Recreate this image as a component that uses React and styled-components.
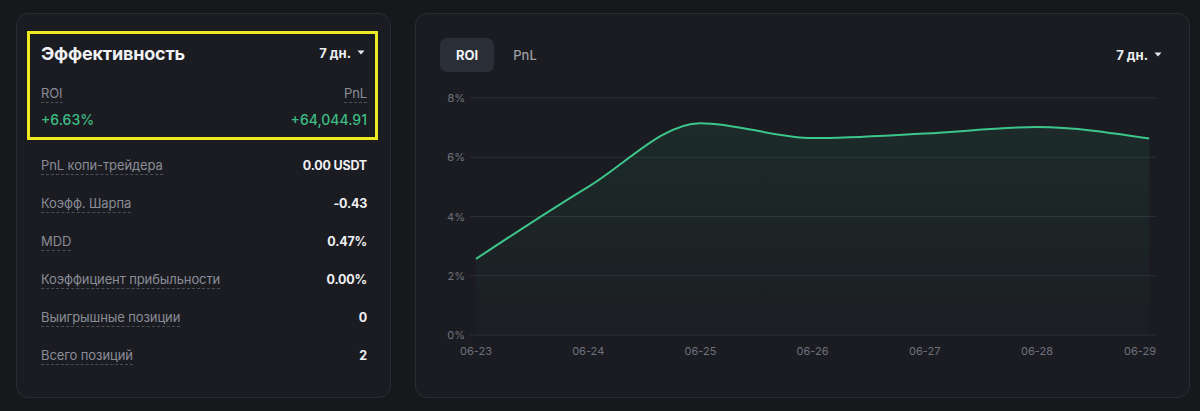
import React from 'react';
import styled, { createGlobalStyle } from 'styled-components';

const GlobalStyle = createGlobalStyle`
    body {
        margin: 0;
        background: #17181c;
        font-family: Inter, "Noto Sans", sans-serif;
        -webkit-font-smoothing: antialiased;
    }
`;

const stats = [
    { label: 'PnL копи-трейдера', value: '0.00 USDT' },
    { label: 'Коэфф. Шарпа', value: '-0.43' },
    { label: 'MDD', value: '0.47%' },
    { label: 'Коэффициент прибыльности', value: '0.00%' },
    { label: 'Выигрышные позиции', value: '0' },
    { label: 'Всего позиций', value: '2' },
];

const series = [
    { day: '06-23', roi: 2.57 },
    { day: '06-24', roi: 5.0 },
    { day: '06-25', roi: 7.15 },
    { day: '06-26', roi: 6.65 },
    { day: '06-27', roi: 6.8 },
    { day: '06-28', roi: 7.02 },
    { day: '06-29', roi: 6.63 },
];

const CH = { left: 30, right: 716, zero: 251, step: 29.625, x0: 36, dx: 112.2 };

function monotonePath(pts) {
    const n = pts.length;
    const s = [];
    for (let i = 0; i < n - 1; i++) {
        s.push((pts[i + 1][1] - pts[i][1]) / (pts[i + 1][0] - pts[i][0]));
    }
    const t = new Array(n).fill(0);
    for (let i = 1; i < n - 1; i++) {
        const h0 = pts[i][0] - pts[i - 1][0];
        const h1 = pts[i + 1][0] - pts[i][0];
        const p = (s[i - 1] * h1 + s[i] * h0) / (h0 + h1);
        t[i] = (Math.sign(s[i - 1]) + Math.sign(s[i])) *
            Math.min(Math.abs(s[i - 1]), Math.abs(s[i]), 0.5 * Math.abs(p)) || 0;
    }
    t[0] = (3 * s[0] - t[1]) / 2;
    t[n - 1] = (3 * s[n - 2] - t[n - 2]) / 2;
    let d = `M${pts[0][0]},${pts[0][1]}`;
    for (let i = 0; i < n - 1; i++) {
        const [xa, ya] = pts[i];
        const [xb, yb] = pts[i + 1];
        const h = (xb - xa) / 3;
        d += ` C${xa + h},${ya + h * t[i]} ${xb - h},${yb - h * t[i + 1]} ${xb},${yb}`;
    }
    return d;
}

function Caret() {
    return (
        <svg width="8" height="5" viewBox="0 0 8 5">
            <path d="M0.5 0.5 H7.5 L4 4.5 Z" fill="#e8e9ee" />
        </svg>
    );
}

function RoiChart() {
    const pts = series.map((p, i) => [CH.x0 + CH.dx * i, CH.zero - p.roi * CH.step]);
    const line = monotonePath(pts);
    const last = pts[pts.length - 1];
    const area = `${line} L${last[0]},${CH.zero} L${pts[0][0]},${CH.zero} Z`;
    const ticks = [0, 2, 4, 6, 8];

    return (
        <ChartSvg width="726" height="290" viewBox="0 0 726 290">
            <defs>
                <linearGradient id="roiFill" x1="0" y1="0" x2="0" y2="1">
                    <stop offset="0%" stopColor="#2fbf83" stopOpacity="0.09" />
                    <stop offset="100%" stopColor="#2fbf83" stopOpacity="0.01" />
                </linearGradient>
            </defs>
            {ticks.map((v) => {
                const y = CH.zero - v * CH.step;
                return (
                    <g key={v}>
                        <line x1={CH.left} x2={CH.right} y1={y} y2={y} stroke="#2d2f37" strokeWidth="1" />
                        <text x="25" y={y + 4} textAnchor="end" fontSize="11" fill="#6f727d">{v}%</text>
                    </g>
                );
            })}
            <path d={area} fill="url(#roiFill)" />
            <path d={line} fill="none" stroke="#3cc68c" strokeWidth="2" />
            {series.map((p, i) => {
                const lastOne = i === series.length - 1;
                return (
                    <text
                        key={p.day}
                        x={lastOne ? CH.right : CH.x0 + CH.dx * i}
                        y="271"
                        textAnchor={lastOne ? 'end' : 'middle'}
                        fontSize="11"
                        fill="#6f727d"
                    >
                        {p.day}
                    </text>
                );
            })}
        </ChartSvg>
    );
}

function App() {
    return (
        <>
            <GlobalStyle />
            <Page>
                <StatsCard>
                    <Highlight>
                        <TitleRow>
                            <Title>Эффективность</Title>
                            <Period>7 дн. <Caret /></Period>
                        </TitleRow>
                        <Metrics>
                            <Metric>
                                <DottedLabel>ROI</DottedLabel>
                                <Gain>+6.63%</Gain>
                            </Metric>
                            <Metric $right>
                                <DottedLabel>PnL</DottedLabel>
                                <Gain>+64,044.91</Gain>
                            </Metric>
                        </Metrics>
                    </Highlight>
                    <StatList>
                        {stats.map((s) => (
                            <StatRow key={s.label}>
                                <DottedLabel>{s.label}</DottedLabel>
                                <StatValue>{s.value}</StatValue>
                            </StatRow>
                        ))}
                    </StatList>
                </StatsCard>
                <ChartCard>
                    <ChartHeader>
                        <Tabs>
                            <Tab $active>ROI</Tab>
                            <Tab>PnL</Tab>
                        </Tabs>
                        <Period $chart>7 дн. <Caret /></Period>
                    </ChartHeader>
                    <RoiChart />
                </ChartCard>
            </Page>
        </>
    );
}

const Page = styled.div`
    display: flex;
    gap: 24px;
    padding: 13px 0 0 16px;
    height: 411px;
    box-sizing: border-box;
`;

const Card = styled.div`
    box-sizing: border-box;
    height: 385px;
    background: #1b1c21;
    border: 1px solid #2b2c33;
    border-radius: 12px;
`;

const StatsCard = styled(Card)`
    width: 375px;
    padding: 17px 12px 0 10px;
`;

const Highlight = styled.div`
    border: 3px solid #eeea1f;
    padding: 7px 8px 7px 11px;
`;

const TitleRow = styled.div`
    display: flex;
    justify-content: space-between;
    align-items: center;
    height: 24px;
`;

const Title = styled.h2`
    margin: 0;
    font-size: 18px;
    font-weight: 700;
    color: #f1f2f5;
    letter-spacing: -0.2px;
`;

const Period = styled.div`
    display: flex;
    align-items: center;
    gap: 6px;
    font-size: 13px;
    font-weight: 700;
    color: #eceef2;
    margin-right: ${(p) => (p.$chart ? '3px' : '2px')};
    svg {
        margin-top: -2px;
    }
`;

const Metrics = styled.div`
    display: flex;
    justify-content: space-between;
    margin-top: 19px;
`;

const Metric = styled.div`
    display: flex;
    flex-direction: column;
    align-items: ${(p) => (p.$right ? 'flex-end' : 'flex-start')};
`;

const DottedLabel = styled.span`
    font-size: 13px;
    line-height: 18px;
    color: #8a8c97;
    letter-spacing: -0.1px;
    border-bottom: 1px dashed #4c4e58;
`;

const Gain = styled.span`
    margin-top: 7px;
    font-size: 14px;
    line-height: 20px;
    font-weight: 500;
    color: #3dbd84;
`;

const StatList = styled.div`
    margin-top: 6px;
    padding: 0 11px 0 14px;
`;

const StatRow = styled.div`
    display: flex;
    justify-content: space-between;
    align-items: center;
    height: 38px;
`;

const StatValue = styled.span`
    font-size: 12.5px;
    font-weight: 700;
    color: #eef0f3;
    letter-spacing: -0.2px;
`;

const ChartCard = styled(Card)`
    width: 775px;
    padding: 24px 24px 0 24px;
`;

const ChartHeader = styled.div`
    display: flex;
    justify-content: space-between;
    align-items: center;
`;

const Tabs = styled.div`
    display: flex;
    gap: 3px;
`;

const Tab = styled.button`
    height: 34px;
    padding: 0 16px;
    border: none;
    border-radius: 7px;
    font-family: inherit;
    font-size: 13px;
    font-weight: ${(p) => (p.$active ? 700 : 500)};
    color: ${(p) => (p.$active ? '#f1f2f5' : '#9a9ca6')};
    background: ${(p) => (p.$active ? '#2a2e37' : 'transparent')};
`;

const ChartSvg = styled.svg`
    display: block;
    margin-top: 12px;
    font-family: Inter, "Noto Sans", sans-serif;
`;

export default App;
